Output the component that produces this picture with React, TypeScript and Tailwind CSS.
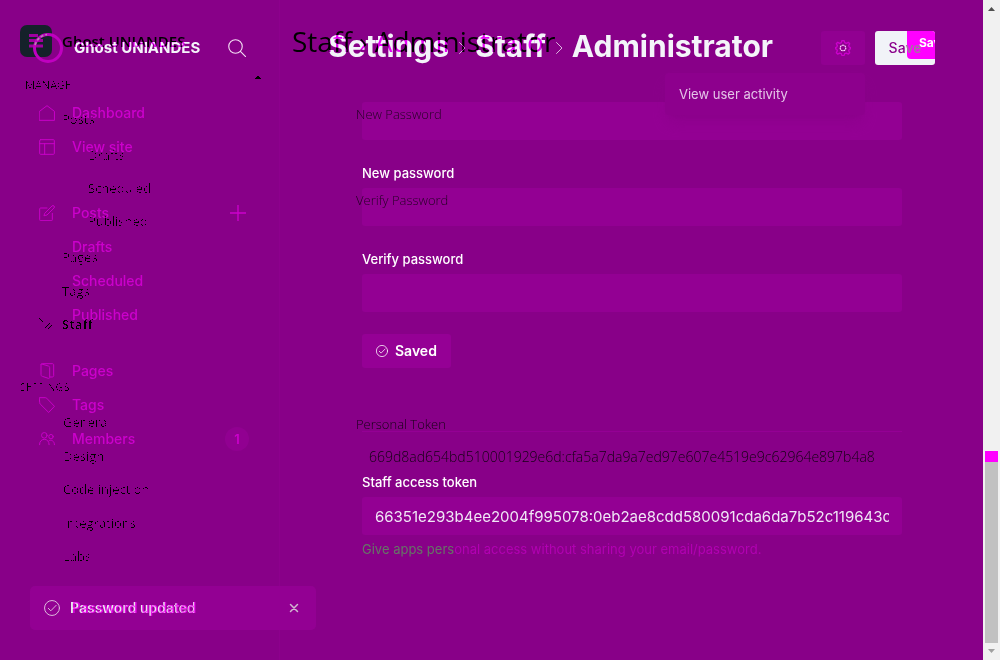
import type { ReactNode } from 'react';

function Icon({ children, className = 'size-4' }: { children: ReactNode; className?: string }) {
  return (
    <svg viewBox="0 0 24 24" fill="none" stroke="currentColor" strokeWidth="1.5" strokeLinecap="round" strokeLinejoin="round" className={className} aria-hidden="true">
      {children}
    </svg>
  );
}

const home = <path d="M.8 9.500 12 1l11.200 8.500V23H.8z" />;
const layout = <><rect x="1" y="1" width="22" height="22" rx="1.5" /><path d="M1 7h22M8.500 7v16" /></>;
const compose = <><path d="M20 12.500V22a1.500 1.500 0 0 1-1.500 1.500h-16A1.500 1.500 0 0 1 1 22V6a1.500 1.500 0 0 1 1.500-1.500H12" /><path d="m9 12 10.500-10.500a2 2 0 0 1 3 3L12 15l-4 1z" /></>;
const pages = <><path d="M3 2.500C3 1.500 4 1 5 1h15c1.500 0 2 .8 2 2v16c0 1-.8 2-2 2h-3" /><path d="m4 1.500 10 3c1.500.5 2 1 2 2.500v14.500c0 1.500-1 2-2 1.500l-9-3c-1.500-.5-2-1-2-2.500V2.500" /></>;
const tag = <path d="M1 1h8.500c1 0 1.500.3 2 .8L23.200 14 14.500 23.200 1.800 10.500C1.200 10 1 9.500 1 8.500z" />;
const members = <><circle cx="8" cy="6.500" r="4.200" /><circle cx="18" cy="8.500" r="3.300" /><path d="M.8 20.500c0-5 3-8 7.200-8s7.200 3 7.200 8M15 14.500c3.500-2 8.200.5 8.200 6" /></>;
const check = <><circle cx="12" cy="12" r="11.200" /><path d="m6.500 12.500 3.700 3.700 8-8.200" /></>;

function NavItem({ label, icon, children }: { label: string; icon?: ReactNode; children?: ReactNode }) {
  return (
    <li className="flex h-[34px] items-center">
      <a href="#" className="flex flex-1 items-center gap-[17px]">
        <span className="flex size-4 text-[#c800c8]">{icon && <Icon>{icon}</Icon>}</span>
        <span>{label}</span>
      </a>
      {children}
    </li>
  );
}

function Field({ id, label, value = '', type = 'password' }: { id: string; label: string; value?: string; type?: string }) {
  return (
    <div className="flex flex-col gap-[5px]">
      <label htmlFor={id} className="text-[13px] leading-5 font-medium text-white">{label}</label>
      <input id={id} type={type} defaultValue={value} className="h-[38px] w-full rounded-[3px] bg-[#930093] px-[13px] text-[15px] text-[#f0e6f6] outline-none" />
    </div>
  );
}

const crispEchoes = [
  { text: 'MANAGE', place: 'left-[25px] top-[75px] text-[11px]' },
  { text: 'Posts', place: 'left-[62px] top-[109px] text-[13px]' },
  { text: 'Drafts', place: 'left-[88px] top-[145px] text-[13px]' },
  { text: 'Scheduled', place: 'left-[88px] top-[178px] text-[13px]' },
  { text: 'Published', place: 'left-[88px] top-[211px] text-[13px]' },
  { text: 'Pages', place: 'left-[62px] top-[247px] text-[13px]' },
  { text: 'Tags', place: 'left-[62px] top-[281px] text-[13px]' },
  { text: 'Staff', place: 'left-[62px] top-[314px] text-[13px] font-bold' },
  { text: 'SETTINGS', place: 'left-[20px] top-[377px] text-[11px]' },
  { text: 'General', place: 'left-[63px] top-[412px] text-[13px]' },
  { text: 'Design', place: 'left-[63px] top-[446px] text-[13px]' },
  { text: 'Code injection', place: 'left-[63px] top-[479px] text-[13px]' },
  { text: 'Integrations', place: 'left-[63px] top-[513px] text-[13px]' },
  { text: 'Labs', place: 'left-[63px] top-[546px] text-[13px]' },
];

const softEchoes = [
  { text: 'New Password', place: 'left-[356px] top-[104px] text-[13px]' },
  { text: 'Verify Password', place: 'left-[356px] top-[190px] text-[13px]' },
  { text: 'Personal Token', place: 'left-[356px] top-[414px] text-[13px]' },
  { text: '669d8ad654bd510001929e6d:cfa5a7da9a7ed97e607e4519e9c62964e897b4a8', place: 'left-[369px] top-[447px] text-[14px]' },
];

function EchoLayer() {
  return (
    <div aria-hidden="true" className="pointer-events-none absolute inset-0 z-20 overflow-hidden font-['Open_Sans',sans-serif] text-[#740074] mix-blend-color-burn">
      <div className="absolute inset-0 [filter:url(#crisp)]">
        {crispEchoes.map((e) => (
          <span key={e.text} className={`absolute leading-5 whitespace-nowrap ${e.place}`}>{e.text}</span>
        ))}
        <svg viewBox="0 0 16 16" className="absolute top-[317px] left-[38px] size-4"><path d="M1 1l4 4M7 11l5-5M10 12l4-4" stroke="currentColor" strokeWidth="1" /></svg>
        <svg viewBox="0 0 8 5" className="absolute top-[75px] left-[254px] h-[5px] w-2"><path d="M0 4h8L4 0z" fill="currentColor" /></svg>
      </div>
      {softEchoes.map((e) => (
        <span key={e.text} className={`absolute leading-5 font-light whitespace-nowrap opacity-85 ${e.place}`}>{e.text}</span>
      ))}
      <span className="absolute top-[23px] left-[292px] text-[28px] leading-9 whitespace-nowrap">Staff › Administrator</span>
      <span className="absolute top-[31px] left-[62px] text-[15px] leading-5 font-semibold whitespace-nowrap">Ghost UNIANDES</span>
    </div>
  );
}

function Scrollbar() {
  return (
    <div aria-hidden="true" className="flex w-[17px] shrink-0 flex-col items-center bg-[#f1f1f1]">
      <svg viewBox="0 0 17 17" className="size-[17px]"><path d="M5 11h7L8.500 7z" fill="#505050" /></svg>
      <div className="flex-1" />
      <div className="h-[11px] w-[13px] bg-[#ff00ff]" />
      <div className="h-[181px] w-[13px] bg-[#c1c1c1]" />
      <svg viewBox="0 0 17 17" className="size-[17px]"><path d="M5 6h7l-3.500 4z" fill="#a0a0a0" /></svg>
    </div>
  );
}

export default function App() {
  return (
    <div className="relative isolate flex min-h-screen bg-[#880088] font-['Inter',sans-serif] text-[#f4f4fa]">
      <svg className="absolute size-0" aria-hidden="true">
        <filter id="crisp" colorInterpolationFilters="sRGB"><feComponentTransfer><feFuncA type="discrete" tableValues="0 0 0 1" /></feComponentTransfer></filter>
      </svg>

      <aside className="w-[280px] shrink-0 border-r border-[#8d008d] pr-[30px] pl-[39px]">
        <div className="flex h-24 items-center justify-between">
          <div className="relative flex items-center">
            <svg viewBox="0 0 32 32" className="absolute -top-[13px] -left-[19px] size-8" aria-hidden="true">
              <rect width="32" height="32" rx="7" fill="#15212a" />
              <path d="M9 10.500h9M9 15.500h14M9 21h14" stroke="#a000a0" strokeWidth="3" />
            </svg>
            <svg viewBox="0 0 32 32" className="absolute -top-[6px] -left-[7px] size-8" aria-hidden="true">
              <circle cx="16" cy="16" r="13.500" fill="none" stroke="#c000c0" strokeWidth="3" />
              <path d="M3 13Q6 4 15 2.500" fill="none" stroke="#b58cad" strokeWidth="1.500" strokeDasharray="3 2" />
            </svg>
            <span className="pl-[35px] text-[15px] leading-5 font-bold">Ghost UNIANDES</span>
          </div>
          <button type="button" aria-label="Search" className="mr-[3px] text-[#f4dff4]">
            <Icon className="size-[18px]"><circle cx="10" cy="10" r="9" /><path d="m16.500 16.500 7 7" /></Icon>
          </button>
        </div>
        <nav className="text-sm font-medium text-[#cc00cc]">
          <ul>
            <NavItem label="Dashboard" icon={home} />
            <NavItem label="View site" icon={layout} />
          </ul>
          <ul className="mt-8">
            <NavItem label="Posts" icon={compose}>
              <button type="button" aria-label="New post" className="mr-[3px]"><Icon><path d="M12 0v24M0 12h24" strokeWidth="2" /></Icon></button>
            </NavItem>
            <NavItem label="Drafts" />
            <NavItem label="Scheduled" />
            <NavItem label="Published" />
          </ul>
          <ul className="mt-[22px]">
            <NavItem label="Pages" icon={pages} />
            <NavItem label="Tags" icon={tag} />
            <NavItem label="Members" icon={members}>
              <span className="flex size-6 items-center justify-center rounded-full bg-[#910091] text-[13px] font-semibold">1</span>
            </NavItem>
          </ul>
        </nav>
      </aside>

      <main className="min-w-0 flex-1 px-12">
        <header className="flex h-24 items-center justify-between">
          <h1 className="flex items-center gap-[7px] pb-1 text-[30px] leading-8 font-bold whitespace-nowrap">
            <a href="#">Settings</a>
            <Icon className="mt-1 size-3"><path d="m7 1 11 11L7 23" /></Icon>
            <a href="#">Staff</a>
            <Icon className="mt-1 size-3"><path d="m7 1 11 11L7 23" /></Icon>
            <span>Administrator</span>
          </h1>
          <div className="flex gap-[10px]">
            <div className="relative">
              <button type="button" aria-label="User actions" className="flex h-[34px] w-11 items-center justify-center rounded-[3px] bg-[#910091] text-[#cc00cc]">
                <Icon>
                  <path d="M9.500 4 10.500.8h3L14.500 4l2.500 1 3-1.500 2 2L20.500 8.500l1 2.300 1.700.5v2l-1.700.5-1 2.300 1.500 3-2 2-3-1.500-2.500 1-1 2.800h-3l-1-2.800-2.500-1-3 1.500-2-2 1.500-3-1-2.300-1.700-.5v-2l1.700-.5 1-2.300L2 5.500l2-2L7 5z" strokeWidth="2" />
                  <circle cx="12" cy="12" r="4.200" stroke="#ffd9ff" strokeWidth="1.800" strokeDasharray="1.500 2.200" />
                </Icon>
              </button>
              <div className="absolute top-[42px] right-0 z-10 w-[200px] rounded-[4px] bg-[#8d008d] px-[14px] py-[11px] shadow-lg shadow-[#84008480]">
                <a href="#" className="block text-[13px] leading-5 text-[#e4c4e8]">View user activity</a>
              </div>
            </div>
            <button type="button" className="relative h-[34px] w-[60px] overflow-hidden rounded-[3px] bg-[#f1f3f8] text-sm font-medium text-[#8b008b]">
              <span aria-hidden="true" className="absolute top-0 right-0 h-7 w-7 overflow-hidden rounded-bl-[4px] bg-[#ff00ff] pl-3 text-left text-xs leading-6 font-bold text-white">Save</span>
              <span className="relative">Sa<span className="text-[#a0789c]">ve</span></span>
            </button>
          </div>
        </header>

        <form className="pt-[6px] pr-[33px] pl-[34px]">
          <input aria-label="Old password" type="password" className="block h-[38px] w-full rounded-[3px] bg-[#930093] outline-none" />
          <div className="mt-[23px] flex flex-col gap-[23px]">
            <Field id="new-password" label="New password" />
            <Field id="verify-password" label="Verify password" />
          </div>
          <button type="button" className="mt-[22px] flex h-[34px] items-center gap-[7px] rounded-[3px] bg-[#950095] px-[14px] text-sm font-semibold text-white">
            <Icon className="size-3">{check}</Icon>
            Saved
          </button>
          <hr className="mt-[63px] mb-10 border-[#940094]" />
          <Field id="token" label="Staff access token" type="text" value="66351e293b4ee2004f995078:0eb2ae8cdd580091cda6da7b52c119643c8f1e" />
          <p className="mt-1 text-[13px] leading-5 text-[#b200b2]">
            <span className="text-[#667566]">Give apps pers</span>onal access without sharing your email/password.
          </p>
        </form>
      </main>

      <Scrollbar />
      <EchoLayer />

      <div role="status" className="absolute top-[586px] left-[30px] z-30 flex h-11 w-[286px] items-center rounded-[5px] bg-[#930093] pr-4 pl-[14px]">
        <Icon className="size-4 text-[#dcb8dc]">{check}</Icon>
        <span className="relative ml-[10px] text-sm leading-5 font-semibold text-[#e8e8ee]">
          Password updated
          <span aria-hidden="true" className="absolute top-0 left-[2px] font-medium whitespace-nowrap text-[#f000f0] opacity-80">Password updated</span>
        </span>
        <button type="button" aria-label="Close" className="ml-auto text-[#d0b8d0]">
          <Icon className="size-3"><path d="m5 5 14 14M19 5 5 19" strokeWidth="3" /></Icon>
        </button>
      </div>
    </div>
  );
}
